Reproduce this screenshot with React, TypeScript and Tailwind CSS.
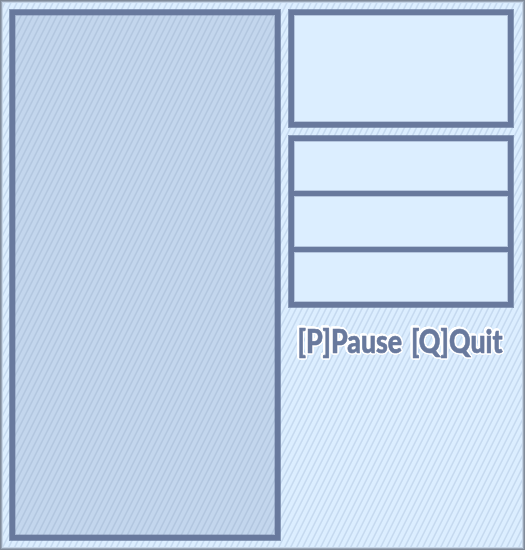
function Frame({ className }: { className: string }) {
  return (
    <div className={`border-[5px] border-[#68799d] shadow-[0_0_0_1px_#68799dbb,inset_0_0_0_1px_#68799d55] ${className}`} />
  );
}

const soft = "shadow-[inset_0_0_0_1px_#68799d55]";

export default function App() {
  return (
    <main className="relative flex h-[550px] w-[525px] gap-[9px] overflow-hidden bg-[#dceeff] bg-[repeating-linear-gradient(116.565deg,#c5d9ef_0px,#c5d9ef_0.5px,#dceeff_1.5px,#dceeff_4.37px,#c5d9ef_5.367px)] p-[10px]">
      <Frame className="h-[530px] w-[270px] shrink-0 bg-[#c2d5ec] bg-[repeating-linear-gradient(116.565deg,#b2c6df_0px,#b2c6df_0.5px,#c3d6ed_1.5px,#c3d6ed_4.37px,#b2c6df_5.367px)]" />
      <aside className="flex w-[224px] shrink-0 flex-col">
        <Frame className="h-[117px] bg-[#dceeff]" />
        <div className="mt-[9px] grid h-[171px] grid-rows-[50px_51px_50px] gap-[5px] border-[5px] border-[#68799d] bg-[#68799d] shadow-[0_0_0_1px_#68799dbb]">
          <div className={`bg-[#dceeff] ${soft}`} />
          <div className={`bg-[#dceeff] ${soft}`} />
          <div className={`bg-[#dceeff] ${soft}`} />
        </div>
        <svg
          className="mt-[13px] h-12 w-[224px] overflow-visible font-['Lato','Liberation_Sans',sans-serif] text-[33px] font-black [filter:drop-shadow(1px_0_0_#fff)_drop-shadow(-1px_0_0_#fff)_drop-shadow(0_1px_0_#fff)_drop-shadow(0_-1px_0_#fff)_drop-shadow(0.5px_0.5px_0_#fff)_drop-shadow(-0.5px_-0.5px_0_#fff)]"
          viewBox="0 0 224 48"
        >
          <text
            x="8.5"
            y="32.7"
            textLength="205"
            lengthAdjust="spacingAndGlyphs"
            wordSpacing="3"
            fill="#68799d"
            stroke="#68799d"
            strokeWidth="0.6"
          >
            [P]Pause [Q]Quit
          </text>
        </svg>
      </aside>
      <div className="pointer-events-none absolute inset-0 shadow-[inset_0_0_0_1px_#808a98,inset_0_0_0_2px_#98a5b6,inset_0_0_0_3px_#c3d2e4]" />
    </main>
  );
}
